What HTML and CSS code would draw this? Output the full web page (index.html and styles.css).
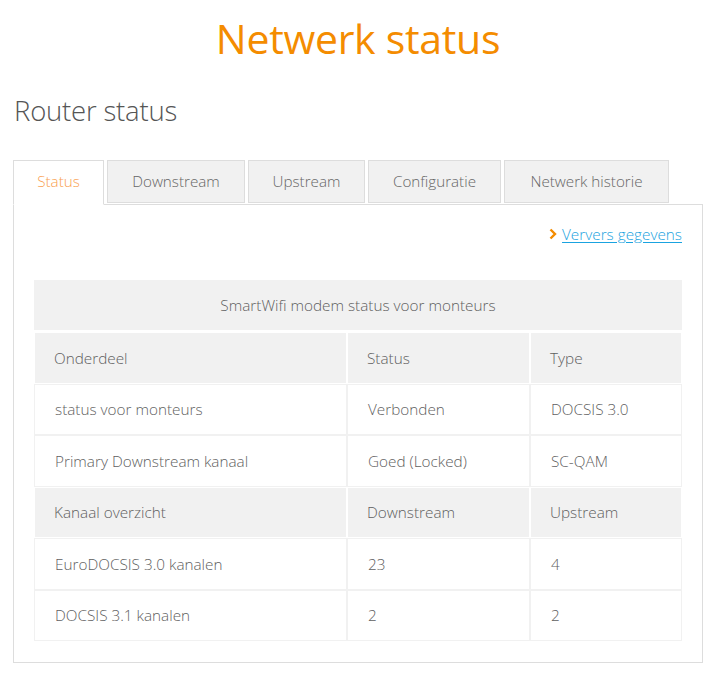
FILE: index.html
```html
<!DOCTYPE html>
<html lang="nl">
<head>
<meta charset="utf-8">
<title>Netwerk status</title>
<link rel="stylesheet" href="styles.css">
</head>
<body>
<div class="page">
  <h1 class="title">Netwerk status</h1>
  <h2 class="subtitle">Router status</h2>
  <ul class="tabs">
    <li class="tab active">Status</li>
    <li class="tab">Downstream</li>
    <li class="tab">Upstream</li>
    <li class="tab">Configuratie</li>
    <li class="tab">Netwerk historie</li>
  </ul>
  <div class="panel">
    <div class="refresh">
      <svg class="chev" width="8" height="12" viewBox="0 0 8 12"><path d="M1.5 1.5 L6 6 L1.5 10.5" fill="none" stroke="#f48c00" stroke-width="2.4"/></svg>
      <a href="#" class="link">Ververs gegevens</a>
    </div>
    <table class="grid">
      <colgroup><col class="c1"><col class="c2"><col class="c3"></colgroup>
      <tr><th colspan="3" class="caption">SmartWifi modem status voor monteurs</th></tr>
      <tr><th>Onderdeel</th><th>Status</th><th>Type</th></tr>
      <tr><td>status voor monteurs</td><td>Verbonden</td><td>DOCSIS 3.0</td></tr>
      <tr><td>Primary Downstream kanaal</td><td>Goed (Locked)</td><td>SC-QAM</td></tr>
      <tr><th>Kanaal overzicht</th><th>Downstream</th><th>Upstream</th></tr>
      <tr><td>EuroDOCSIS 3.0 kanalen</td><td>23</td><td>4</td></tr>
      <tr><td>DOCSIS 3.1 kanalen</td><td>2</td><td>2</td></tr>
    </table>
  </div>
</div>
</body>
</html>
```
FILE: styles.css
```css
html, body { margin: 0; padding: 0; background: #fff; }
body { font-family: "Open Sans", "Noto Sans", sans-serif; color: #666; }
.page { width: 690px; margin-left: 13px; }
.title {
  margin: 0; padding-top: 14px;
  text-align: center; font-size: 41px; font-weight: 400;
  color: #f48c00; line-height: 48px; letter-spacing: -0.3px;
}
.subtitle {
  margin: 32px 0 0 1px; font-size: 27.5px; font-weight: 300; color: #555;
  line-height: 34px; letter-spacing: -0.2px;
}
.tabs {
  list-style: none; margin: 32px 0 0 0; padding: 0;
  display: flex; gap: 3px; position: relative; z-index: 1;
}
.tab {
  height: 43px; line-height: 40px; box-sizing: border-box;
  padding: 0; text-align: center; font-size: 15.2px; color: #666; font-weight: 300;
  background: #f1f1f1; border: 1px solid #dddddd;
}
.tab.active {
  background: #fff; color: #f9a050; border-bottom-color: #fff; height: 45px;
}
.tabs .tab:nth-child(1) { width: 91px; }
.tabs .tab:nth-child(2) { width: 138px; }
.tabs .tab:nth-child(3) { width: 117px; }
.tabs .tab:nth-child(4) { width: 133px; }
.tabs .tab:nth-child(5) { width: 165px; }
.panel {
  margin-top: -1px; border: 1px solid #dddddd;
  padding: 19px 20px 21px 20px;
}
.refresh {
  display: flex; justify-content: flex-end; align-items: center; gap: 5px;
  height: 20px;
}
.chev { display: block; }
.link { color: #1aa3e0; font-size: 15.3px; font-weight: 300; text-decoration: underline; text-underline-offset: 2px; }
.grid {
  width: 100%; margin-top: 36px;
  border-collapse: separate; border-spacing: 0;
  font-size: 15.3px;
}
.c1 { width: 313px; }
.c2 { width: 183px; }
.grid th, .grid td {
  height: 51.5px; box-sizing: border-box; text-align: left;
  padding: 0 0 0 19px; font-weight: 300; color: #5f5f5f;
}
.grid th { background: #f1f1f1; border: 1px solid #fff; }
.grid td { background: #fff; border: 1px solid #f1f1f1; padding-left: 20px; }
.grid th.caption { text-align: center; padding: 0; border: none; border-bottom: 2px solid #fff; height: 52px; }
```
